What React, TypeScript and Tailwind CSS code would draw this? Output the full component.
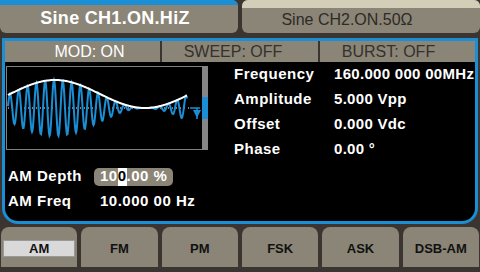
import React from "react"

const BLUE = "#1b8fd6"

const PARAMS = [
  { label: "Frequency", value: "160.000 000 00MHz" },
  { label: "Amplitude", value: "5.000 Vpp" },
  { label: "Offset", value: "0.000 Vdc" },
  { label: "Phase", value: "0.00 °" },
]

const MODES = ["AM", "FM", "PM", "FSK", "ASK", "DSB-AM"]

// envelope of the AM wave, x in page pixels
function amp(x: number) {
  return 14 * (1 + Math.cos((2 * Math.PI * (x - 55)) / 180))
}

function Waveform() {
  // svg origin sits at page (7, 67); centre line at page y 108
  const ox = 7
  const cy = 41
  const carrier: string[] = []
  const env: string[] = []
  for (let x = 8; x <= 187; x += 0.5) {
    const a = amp(x)
    const y = cy - a * Math.sin((2 * Math.PI * (x - 7.8)) / 8.8)
    carrier.push(`${(x - ox).toFixed(1)},${y.toFixed(1)}`)
    env.push(`${(x - ox).toFixed(1)},${(cy - a).toFixed(1)}`)
  }
  return (
    <div className="ml-[1px] mt-[4px] flex h-[84px] w-[202px]">
      <div className="flex-1 border-y border-l border-[#808080]">
        <svg width="195" height="82" viewBox="0 0 195 82">
          <line x1="1" y1={cy} x2="184" y2={cy} stroke="#fff" strokeWidth="1" strokeDasharray="1 3" />
          <polyline points={carrier.join(" ")} fill="none" stroke={BLUE} strokeWidth="2" />
          <polyline points={env.join(" ")} fill="none" stroke="#fff" strokeWidth="2" />
          <line x1="183" y1={cy} x2="193" y2={cy} stroke={BLUE} strokeWidth="1.5" />
          <polygon points="186,43 194,43 190,51" fill={BLUE} />
          <line x1="190" y1={cy} x2="190" y2="52" stroke={BLUE} strokeWidth="1.5" />
        </svg>
      </div>
      <div className="w-[6px] bg-[#858585] pt-[31px]">
        <div className="h-[22px] bg-[#1b8fd6]" />
      </div>
    </div>
  )
}

export default function App() {
  return (
    <div className="flex h-[272px] w-[480px] flex-col overflow-hidden bg-[#3a3531] font-['Liberation_Sans',Arial,sans-serif]">
      {/* channel tabs */}
      <div className="flex h-[33px] gap-[4px]">
        <div className="flex flex-1 flex-col overflow-hidden rounded-[6px] rounded-tl-none bg-[#8a8576]">
          <div className="h-[9px] bg-[#1b8fd6]" />
          <div className="flex flex-1 items-center justify-center pb-[1px] pr-[8px] text-[18px] font-bold tracking-[0.3px] text-white">
            Sine CH1.ON.HiZ
          </div>
        </div>
        <div className="flex flex-1 flex-col overflow-hidden rounded-[6px] bg-[#8a8576]">
          <div className="h-[9px] bg-[#d3ceb8]" />
          <div className="flex flex-1 items-center justify-center pb-[1px] pr-[28px] text-[16px] text-[#2e2a26]">
            Sine CH2.ON.50Ω
          </div>
        </div>
      </div>

      {/* main panel */}
      <div className="mx-[2px] mt-[5px] flex h-[186px] flex-col rounded-b-[16px] border-[3px] border-[#1b8fd6] bg-black">
        <div className="flex h-[21px] gap-[2px] bg-[#3a3531] text-[16px]">
          <div className="flex w-[155px] items-center justify-center bg-[#8a8576] pl-[14px] text-white">MOD: ON</div>
          <div className="flex w-[156px] items-center justify-center bg-[#8a8576] pr-[14px] text-[#35312c]">SWEEP: OFF</div>
          <div className="flex flex-1 items-center justify-center bg-[#8a8576] pr-[18px] text-[#35312c]">BURST: OFF</div>
        </div>

        <div className="flex flex-1 text-[15px] font-bold tracking-[0.5px] text-white">
          <div className="w-[229px] shrink-0">
            <Waveform />
            <div className="mt-[14px] pl-[3px]">
              <div className="flex h-[25px] items-center">
                <span className="w-[86px]">AM Depth</span>
                <span className="flex h-[18px] items-center rounded-[5px] bg-[#8a8576] px-[6px]">
                  10<span className="flex h-[18px] items-center bg-white text-black">0</span>.00 %
                </span>
              </div>
              <div className="flex h-[25px] items-center">
                <span className="w-[92px]">AM Freq</span>
                <span>10.000 00 Hz</span>
              </div>
            </div>
          </div>

          <div className="flex flex-col">
            {PARAMS.map((p) => (
              <div key={p.label} className="flex h-[25px] items-center whitespace-nowrap">
                <span className="w-[100px] shrink-0">{p.label}</span>
                <span className="whitespace-nowrap tracking-[0.3px]">{p.value}</span>
              </div>
            ))}
          </div>
        </div>
      </div>

      {/* mode buttons */}
      <div className="mt-[3px] flex h-[40px] gap-[4px] px-[1px]">
        {MODES.map((m, i) => (
          <div key={m} className="flex flex-1 items-center justify-center rounded-t-[8px] bg-[#8a8576] text-[13px] font-bold text-[#111]">
            {i === 0 ? (
              <div className="mx-[2px] mt-[3px] flex h-[17px] w-full items-center justify-center border border-[#9a9a9a] bg-[#d9d9d9]">
                {m}
              </div>
            ) : (
              <span className="mt-[3px]">{m}</span>
            )}
          </div>
        ))}
      </div>
    </div>
  )
}
